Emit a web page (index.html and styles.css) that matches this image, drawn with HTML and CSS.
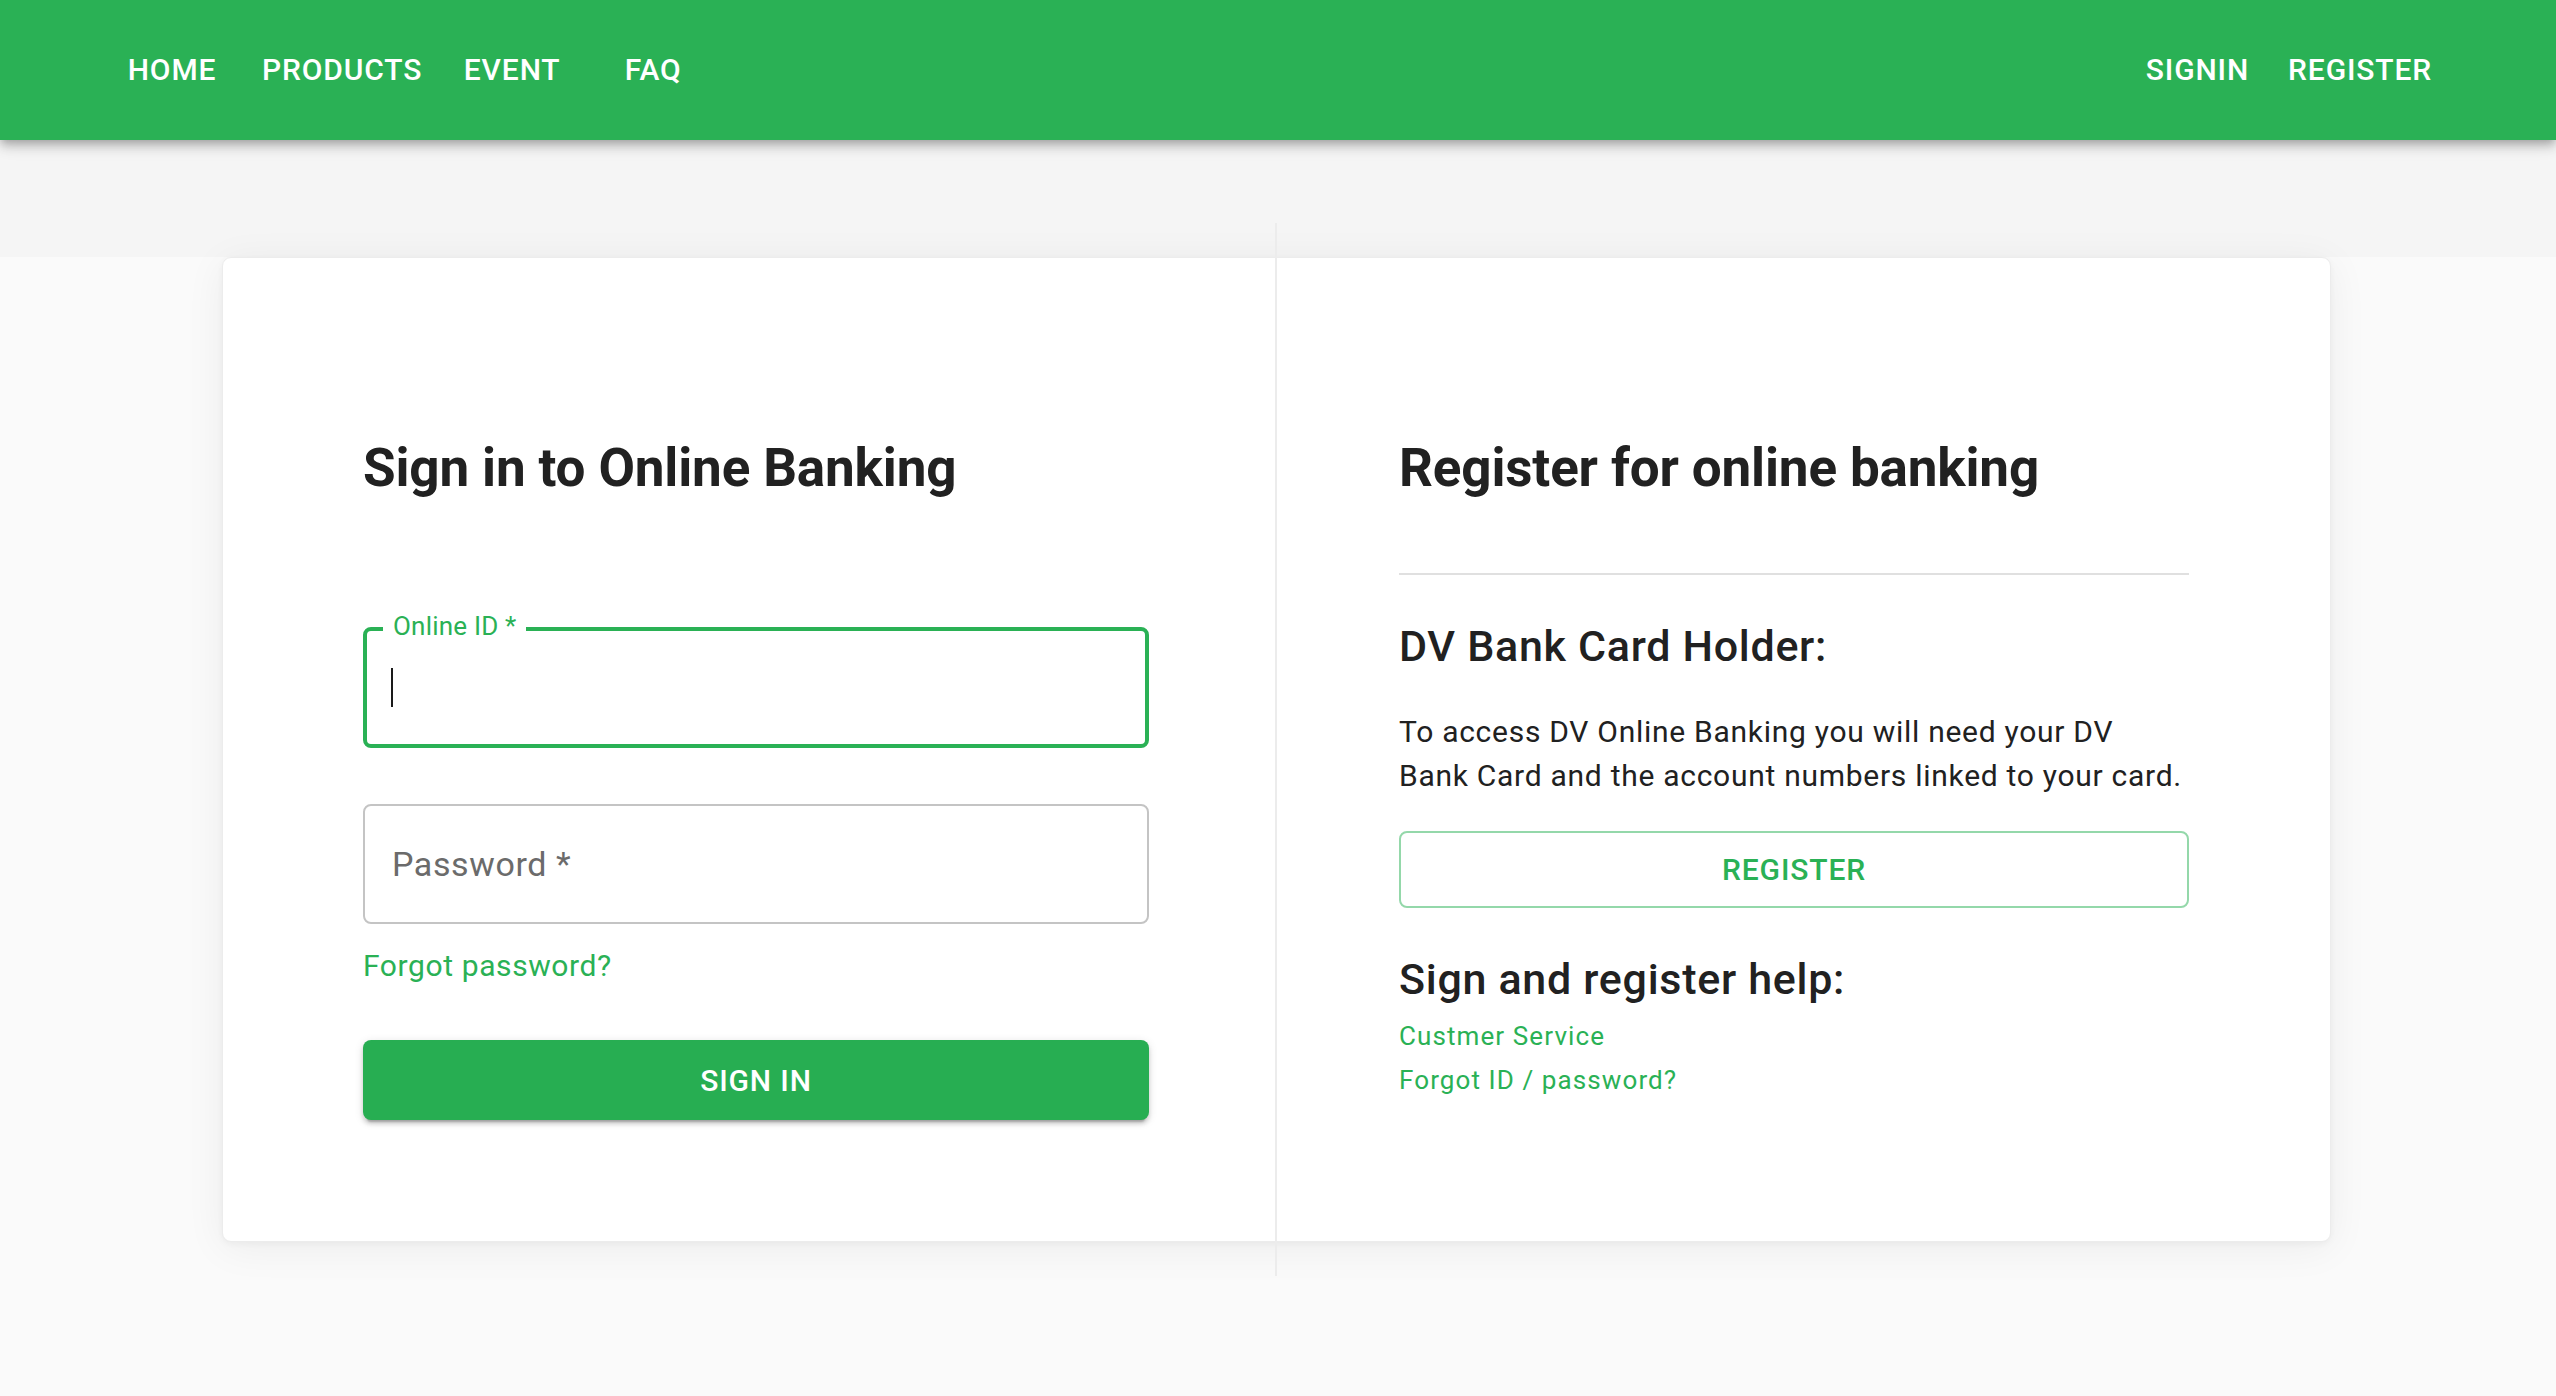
FILE: index.html
```html
<!DOCTYPE html>
<html lang="en">
<head>
<meta charset="utf-8">
<title>DV Bank - Sign in</title>
<link rel="stylesheet" href="styles.css">
</head>
<body>
<header class="appbar">
  <nav class="nav nav-left">
    <a class="nav-btn" href="#">HOME</a>
    <a class="nav-btn" href="#">PRODUCTS</a>
    <a class="nav-btn" href="#">EVENT</a>
    <a class="nav-btn" href="#">FAQ</a>
  </nav>
  <nav class="nav nav-right">
    <a class="nav-btn" href="#">SIGNIN</a>
    <a class="nav-btn" href="#">REGISTER</a>
  </nav>
</header>

<main class="wrap">
  <section class="card">
    <div class="col col-left">
      <h1 class="title">Sign in to Online Banking</h1>
      <div class="field field-focused">
        <span class="field-label">Online ID *</span>
        <span class="caret"></span>
      </div>
      <div class="field field-idle">
        <span class="placeholder">Password *</span>
      </div>
      <a class="link link-forgot" href="#">Forgot password?</a>
      <button class="btn-contained" type="button">SIGN IN</button>
    </div>
    <div class="col col-right">
      <h1 class="title">Register for online banking</h1>
      <hr class="rule">
      <h2 class="subtitle">DV Bank Card Holder:</h2>
      <p class="body">To access DV Online Banking you will need your DV<br>Bank Card and the account numbers linked to your card.</p>
      <button class="btn-outlined" type="button">REGISTER</button>
      <h2 class="subtitle subtitle-help">Sign and register help:</h2>
      <a class="link link-small" href="#">Custmer Service</a>
      <a class="link link-small" href="#">Forgot ID / password?</a>
    </div>
  </section>
</main>
</body>
</html>
```

FILE: styles.css
```css
* { box-sizing: border-box; }

html, body {
  margin: 0;
  padding: 0;
}

body {
  font-family: Roboto, "Liberation Sans", Arial, sans-serif;
  color: #212121;
  min-height: 1396px;
  background: linear-gradient(to bottom, #f5f5f5 0, #f5f5f5 257px, #fafafa 257px, #fafafa 100%);
}

/* ---------- App bar ---------- */
.appbar {
  height: 140px;
  background: #2ab155;
  display: flex;
  align-items: center;
  justify-content: space-between;
  padding: 0 107px 0 104px;
  box-shadow: 0 4px 8px -2px rgba(0,0,0,0.22), 0 8px 10px 0 rgba(0,0,0,0.12), 0 2px 20px 0 rgba(0,0,0,0.10);
  position: relative;
  z-index: 2;
}

.nav {
  display: flex;
  align-items: center;
  gap: 5px;
}

.nav-btn {
  min-width: 136px;
  padding: 12px 17px;
  text-align: center;
  color: #ffffff;
  text-decoration: none;
  font-size: 30px;
  font-weight: 500;
  letter-spacing: 0.86px;
  line-height: 1.75;
}

/* ---------- Main ---------- */
.wrap {
  width: 2109px;
  margin: 83px 0 0 222px;
  padding: 34px 0;
  position: relative;
}

.wrap::after {
  content: "";
  position: absolute;
  left: 1053px;
  top: 0;
  bottom: 0;
  width: 2px;
  background: #ececec;
  z-index: 1;
}

.card {
  background: #ffffff;
  border: 1px solid #ececec;
  border-radius: 9px;
  box-shadow: 0 6px 40px 0 rgba(0,0,0,0.06), 0 2px 6px 0 rgba(0,0,0,0.04);
  display: grid;
  grid-template-columns: 1053px 1fr;
  min-height: 985px;
}

.col {
  display: flex;
  flex-direction: column;
  align-items: stretch;
}

.col-left {
  padding: 178px 127px 120px 140px;
}

.col-right {
  padding: 178px 141px 136px 123px;
}

.title {
  margin: 0;
  font-size: 53px;
  font-weight: 700;
  line-height: 64px;
  letter-spacing: -0.15px;
  color: #212121;
}

/* ---------- Text fields ---------- */
.field {
  position: relative;
  display: flex;
  align-items: center;
  background: #fff;
  border-radius: 8px;
}

.field-focused {
  margin-top: 127px;
  height: 121px;
  border: 4px solid #2ab155;
  padding: 0 24px;
}

.field-label {
  position: absolute;
  top: -20px;
  left: 16px;
  padding: 0 10px;
  background: #ffffff;
  color: #2ab155;
  font-size: 26px;
  line-height: 30px;
  letter-spacing: 0.2px;
}

.caret {
  display: block;
  width: 2px;
  height: 39px;
  background: #1a1a1a;
}

.field-idle {
  margin-top: 56px;
  height: 120px;
  border: 2px solid #c4c4c4;
  padding: 0 27px;
}

.placeholder {
  color: #6b6b6b;
  font-size: 34px;
  letter-spacing: 0.6px;
}

/* ---------- Links ---------- */
.link {
  color: #2ab155;
  text-decoration: none;
  align-self: flex-start;
}

.link-forgot {
  margin-top: 20px;
  font-size: 30px;
  line-height: 44px;
  letter-spacing: 0.6px;
}

.link-small {
  font-size: 26px;
  line-height: 44px;
  letter-spacing: 1.1px;
}

/* ---------- Buttons ---------- */
.btn-contained {
  margin-top: 52px;
  height: 80px;
  border: 0;
  border-radius: 8px;
  background: #27ae52;
  color: #ffffff;
  font-family: Roboto, "Liberation Sans", Arial, sans-serif;
  font-size: 30px;
  font-weight: 500;
  letter-spacing: 0.86px;
  box-shadow: 0 6px 2px -4px rgba(0,0,0,0.2), 0 4px 4px 0 rgba(0,0,0,0.14), 0 2px 10px 0 rgba(0,0,0,0.12);
  cursor: pointer;
}

.btn-outlined {
  margin-top: 33px;
  height: 77px;
  border: 2px solid #94d8aa;
  border-radius: 8px;
  background: #ffffff;
  color: #2ab155;
  font-family: Roboto, "Liberation Sans", Arial, sans-serif;
  font-size: 30px;
  font-weight: 500;
  letter-spacing: 0.86px;
  cursor: pointer;
}

/* ---------- Right column text ---------- */
.rule {
  margin: 73px 0 0;
  border: 0;
  height: 2px;
  background: #e0e0e0;
}

.subtitle {
  margin: 41px 0 0;
  font-size: 43px;
  font-weight: 500;
  line-height: 60px;
  letter-spacing: 0.7px;
  color: #212121;
}

.subtitle-help {
  margin-top: 41px;
  margin-bottom: 5px;
}

.body {
  margin: 34px 0 0;
  font-size: 30px;
  line-height: 44px;
  letter-spacing: 0.72px;
  color: #212121;
}
```
